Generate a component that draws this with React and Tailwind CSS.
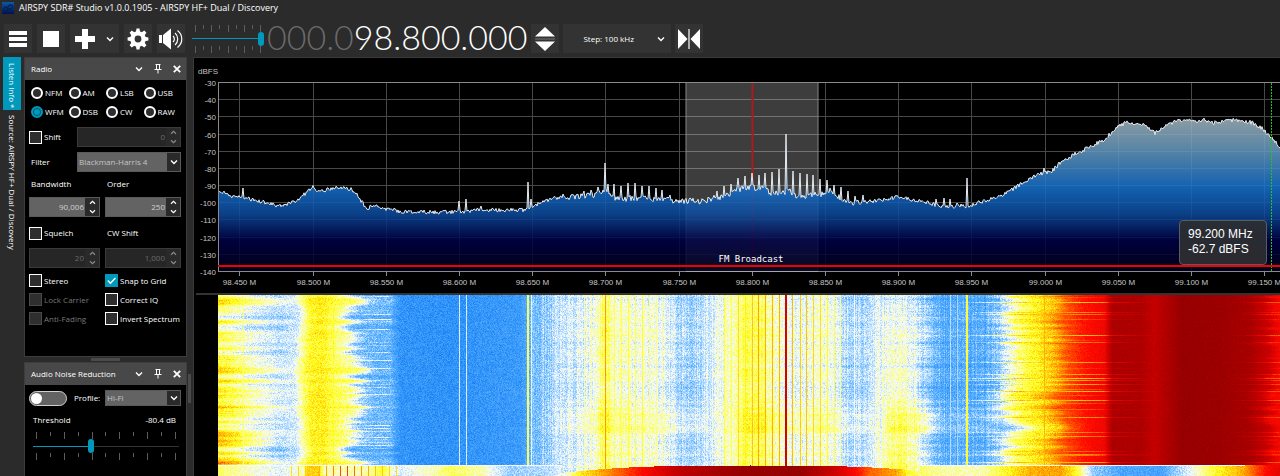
import React, { useState, useEffect, useLayoutEffect, useRef } from 'react';

const BIN_FROM = 218;
const BIN_TO = 1280;
const AXIS_LEFT = 24;

const FLOOR = [
  [218, 191], [228, 194], [232, 197], [242, 197], [250, 199], [262, 202], [270, 204], [280, 206], [288, 204],
  [297, 200], [305, 194], [313, 187], [317, 190], [322, 191], [332, 188], [342, 188], [350, 189], [355, 192],
  [360, 200], [367, 208], [374, 206], [380, 208], [390, 209], [400, 212], [430, 212], [455, 212], [480, 210],
  [500, 210], [525, 210], [531, 207], [545, 201], [560, 197], [575, 197], [590, 196], [600, 193], [605, 189],
  [612, 196], [618, 199], [640, 198], [665, 200], [685, 201], [705, 201], [715, 197], [725, 197], [735, 190],
  [745, 188], [760, 188], [766, 189], [770, 193], [778, 194], [790, 190], [797, 198], [810, 195], [822, 194],
  [830, 191], [836, 195], [843, 201], [850, 204], [865, 202], [880, 200], [898, 197], [910, 199], [925, 202],
  [945, 207], [960, 206], [970, 206], [980, 202], [1000, 197], [1010, 191], [1025, 181], [1040, 174],
  [1052, 171], [1062, 161], [1075, 154], [1090, 147], [1105, 139], [1118, 126], [1128, 122], [1145, 125],
  [1155, 133], [1165, 126], [1177, 120], [1190, 121], [1205, 120], [1212, 123], [1220, 122], [1235, 120],
  [1250, 122], [1262, 128], [1272, 138], [1280, 147],
];

const PEAKS = {
  243: 188, 459: 201, 466: 199, 481: 206, 528: 182, 531: 199, 584: 191, 591: 190, 598: 187, 605: 163, 608: 184,
  614: 184, 621: 186, 628: 183, 635: 183, 642: 186, 649: 186, 656: 188, 662: 190, 670: 195, 717: 191, 724: 186,
  731: 184, 738: 178, 745: 176, 752: 173, 759: 175, 765: 173, 772: 172, 779: 169, 786: 134, 793: 171, 800: 173,
  807: 174, 813: 175, 820: 179, 827: 180, 834: 185, 841: 187, 848: 191, 855: 196, 863: 195, 936: 199, 944: 198,
  950: 199, 957: 203, 967: 178, 1044: 168,
};

// waterfall level per bin, 0 = noise (blue) ... 8 = strongest (dark red)
const LEVELS = [
  [218, 3.9], [232, 3.65], [250, 3.2], [280, 2.75], [294, 2.8], [302, 3.5], [310, 4.05], [322, 4.15], [332, 3.8],
  [345, 3.5], [354, 3], [362, 2.4], [372, 2.1], [390, 2.05], [400, 1.4], [450, 1.35], [520, 1.55], [532, 2.1],
  [548, 2.5], [570, 2.8], [596, 3.1], [600, 3.6], [606, 3.8], [611, 3.3], [640, 3.15], [665, 2.95], [680, 2.6],
  [700, 2.6], [712, 2.9], [730, 3.3], [742, 3.75], [760, 3.75], [768, 3.4], [790, 3], [815, 3.1], [830, 3.2],
  [845, 2.6], [868, 2.6], [882, 3.1], [900, 3.25], [912, 3.1], [925, 2.6], [945, 1.9], [985, 1.9], [1000, 2.5],
  [1012, 3.2], [1024, 3.8], [1044, 4.3], [1054, 4.8], [1066, 5.5], [1082, 5.9], [1104, 6.3], [1112, 7.5],
  [1140, 7.5], [1154, 7.1], [1168, 7.5], [1182, 7.9], [1220, 7.8], [1250, 7.6], [1268, 7], [1280, 6.2],
];

// levels of the newest burst along the lower edge
const BURST = [
  [218, 3.7], [250, 3.2], [280, 2.9], [303, 3.3], [307, 4.5], [318, 4.5], [324, 3.3], [370, 3.4], [382, 4], [396, 2.8],
  [430, 3.3], [450, 3.7], [480, 3.4], [510, 2.4], [550, 2.6], [570, 3.4], [582, 4.3], [610, 5.2], [640, 6],
  [680, 7.2], [740, 7.9], [800, 7.9], [838, 6.8], [870, 5.4], [895, 5], [905, 4.2], [912, 3.8], [940, 3.4], [980, 3.3],
  [1005, 4], [1030, 4.8], [1060, 5], [1076, 4], [1092, 2.4], [1120, 1.8], [1160, 1.7], [1180, 2.6], [1205, 3.6],
  [1240, 4.8], [1265, 6], [1280, 6.5],
];

// carriers: bin, level, width
const CARRIERS = [
  [243, 3.6, 1], [333, 4, 1], [459, 2.8, 1], [466, 2.8, 1], [527, 3.7, 2], [531, 2.9, 1], [605, 5, 1],
  [584, 3.4, 1], [591, 3.4, 1], [614, 3.7, 1], [621, 3.7, 1], [628, 3.8, 1], [635, 3.7, 1], [642, 3.9, 1],
  [649, 3.5, 1], [656, 3.5, 1], [662, 3.4, 1], [724, 3.8, 1], [731, 3.7, 1], [738, 4.3, 1], [745, 4.1, 1],
  [752, 4.6, 1], [758, 4.9, 1], [765, 4.8, 1], [772, 4.8, 1], [779, 4.8, 1], [785, 6.8, 2], [792, 4.7, 1],
  [800, 4.5, 1], [806, 4.6, 1], [813, 4.4, 1], [820, 4.3, 1], [827, 3.9, 1], [834, 3.7, 1], [840, 3.5, 1],
  [854, 3, 1], [950, 2.6, 1], [957, 2.5, 1], [966, 3.9, 2], [1044, 4.8, 1],
];

const PALETTE = [
  [0, 92, 205], [24, 130, 245], [90, 176, 255], [245, 250, 255], [255, 255, 30],
  [255, 160, 0], [255, 10, 0], [200, 0, 0], [145, 0, 0],
];

const random = (seed) => () => {
  seed = (seed + 0x6d2b79f5) | 0;
  let t = Math.imul(seed ^ (seed >>> 15), 1 | seed);
  t = (t + Math.imul(t ^ (t >>> 7), 61 | t)) ^ t;
  return ((t ^ (t >>> 14)) >>> 0) / 4294967296;
};

const interpolate = (points, x) => {
  for (let i = 1; i < points.length; i++) {
    if (x <= points[i][0]) {
      const [x0, y0] = points[i - 1];
      const [x1, y1] = points[i];
      return y0 + ((y1 - y0) * (x - x0)) / (x1 - x0);
    }
  }
  return points[points.length - 1][1];
};

// 0 outside from..to, rises to 1 at the peak
const bump = (x, from, peak, to) => {
  if (x <= from || x >= to) return 0;
  const t = x < peak ? (x - from) / (peak - from) : (to - x) / (to - peak);
  return t * t * (3 - 2 * t);
};

const paletteColor = (level) => {
  const v = Math.max(0, Math.min(7.99, level));
  const i = Math.floor(v);
  const f = v - i;
  return PALETTE[i].map((c, k) => c + (PALETTE[i + 1][k] - c) * f);
};

const useSize = () => {
  const ref = useRef(null);
  const [size, setSize] = useState({ width: 0, height: 0 });
  useLayoutEffect(() => {
    const update = () => setSize({ width: ref.current.clientWidth, height: ref.current.clientHeight });
    update();
    const observer = new ResizeObserver(update);
    observer.observe(ref.current);
    return () => observer.disconnect();
  }, []);
  return [ref, size];
};

const tracePoints = (() => {
  const rand = random(11);
  const points = [];
  for (let bin = BIN_FROM; bin <= BIN_TO; bin++) {
    const jitter = bin > 560 && bin < 860 ? 6 : 4;
    const y = interpolate(FLOOR, bin) + (rand() - 0.5) * jitter;
    points.push([bin, PEAKS[bin] ?? y]);
  }
  return points;
})();

const Spectrum = () => {
  const [ref, { width }] = useSize();
  const scale = (width - AXIS_LEFT) / (BIN_TO - BIN_FROM);
  const toX = (bin) => AXIS_LEFT + (bin - BIN_FROM) * scale;
  const toY = (y) => y - 58;
  const line = tracePoints.map(([b, y]) => `${toX(b).toFixed(1)},${toY(y).toFixed(1)}`).join(' ');
  const levels = Array.from({ length: 12 }, (_, i) => -30 - i * 10);
  const freqs = Array.from({ length: 15 }, (_, i) => 98.45 + i * 0.05);

  return (
    <div ref={ref} className="relative h-[235px] shrink-0 bg-black">
      {width > 0 && (
        <svg className="block w-full h-full font-['Liberation_Sans',sans-serif] text-[8px]" fill="#c4c4c4">
          <defs>
            <linearGradient id="fill" gradientUnits="userSpaceOnUse" x1="0" y1="24" x2="0" y2="213">
              <stop offset="0" stopColor="#c8c8c8" />
              <stop offset="0.2" stopColor="#a0b4be" />
              <stop offset="0.35" stopColor="#6a9cc0" />
              <stop offset="0.56" stopColor="#1671cc" />
              <stop offset="0.7" stopColor="#0c4a9c" />
              <stop offset="0.84" stopColor="#000046" />
              <stop offset="1" stopColor="#00001c" />
            </linearGradient>
          </defs>
          <text x="4" y="16">dBFS</text>
          {levels.map((db, i) => {
            const y = Math.round(24 + (i * 189) / 11) + 0.5;
            return (
              <g key={db}>
                <line x1={AXIS_LEFT} x2={width} y1={y} y2={y} stroke={i === 0 || i === 11 ? '#8a8a8a' : '#484848'} />
                <text x="22" y={y + 3} textAnchor="end">{db}</text>
              </g>
            );
          })}
          {freqs.map((freq, i) => {
            const x = Math.round(toX(239.3 + i * 73.2)) + 0.5;
            return (
              <g key={i}>
                <line x1={x} x2={x} y1="25" y2="213" stroke="#484848" />
                <line x1={x} x2={x} y1="214" y2="218" stroke="#8a8a8a" />
                <text x={x} y="227" textAnchor="middle">{freq.toFixed(3)} M</text>
              </g>
            );
          })}
          <rect x={toX(686)} y="25" width={132 * scale} height="189" fill="#fff" fillOpacity="0.24" />
          <path d={`M${toX(686)} 25V213M${toX(818)} 25V213`} stroke="#858585" />
          <line x1={toX(752.5)} x2={toX(752.5)} y1="25" y2="213" stroke="#a81c1c" strokeWidth="2" />
          <polygon points={`${AXIS_LEFT},213 ${line} ${width},213`} fill="url(#fill)" fillOpacity="0.86" />
          <polyline points={line} fill="none" stroke="#e6eaee" strokeWidth="1" />
          <line x1={toX(1271.5)} x2={toX(1271.5)} y1="25" y2="213" stroke="#1fc41f" strokeDasharray="2 1" />
          <line x1={AXIS_LEFT + 0.5} x2={AXIS_LEFT + 0.5} y1="24" y2="214" stroke="#8a8a8a" />
          <rect x={AXIS_LEFT} y="207" width={width - AXIS_LEFT} height="2" fill="#f00000" />
          <text
            x={toX(751)}
            y="204"
            textAnchor="middle"
            fill="#fff"
            className="font-['DejaVu_Sans_Mono',monospace] text-[9px]"
          >
            FM Broadcast
          </text>
        </svg>
      )}
      <div className="absolute right-[13px] bottom-[28px] w-[88px] h-[45px] pl-2 pt-[6px] rounded-[4px] border border-[#5a5c60] bg-[#2b2d32]/95 text-white font-['Liberation_Sans',sans-serif] text-[12px] leading-[15px] whitespace-nowrap">
        <div>99.200 MHz</div>
        <div>-62.7 dBFS</div>
      </div>
    </div>
  );
};

const smoothRows = (rand, count, spread) => {
  const raw = Array.from({ length: count + spread * 2 }, () => rand() * 2 - 1);
  return Array.from({ length: count }, (_, i) => {
    let sum = 0;
    for (let k = 0; k <= spread * 2; k++) sum += raw[i + k];
    return sum / Math.sqrt(spread * 2 + 1);
  });
};

const Waterfall = () => {
  const [ref, { width, height }] = useSize();
  const canvasRef = useRef(null);

  useEffect(() => {
    if (!width || !height) return;
    const ctx = canvasRef.current.getContext('2d');
    const image = ctx.createImageData(width, height);
    const rand = random(42);
    const slowLeft = smoothRows(rand, height, 6);
    const fastLeft = smoothRows(rand, height, 1);
    const slowMid = smoothRows(rand, height, 8);
    const fastMid = smoothRows(rand, height, 1);
    const slowRight = smoothRows(rand, height, 6);
    const fastRight = smoothRows(rand, height, 1);
    const streak = Array.from({ length: height }, () => (rand() > 0.8 ? rand() : 0));
    const streakLeft = Array.from({ length: height }, () => (rand() > 0.88 ? rand() : 0));
    const burstStart = height - 11;

    const columns = Array.from({ length: width }, (_, col) => {
      const bin = BIN_FROM + (col * (BIN_TO - BIN_FROM)) / width;
      return {
        bin,
        burst: interpolate(BURST, bin),
        carrier: CARRIERS.find(([b, , w]) => bin >= b && bin < b + w),
        ripple: rand() - 0.5,
        edgeA: bump(bin, 270, 300, 320),
        edgeB: bump(bin, 320, 358, 400),
        edgeC: bump(bin, 680, 725, 750) + bump(bin, 860, 880, 895) + bump(bin, 905, 925, 950),
        edgeD: bump(bin, 960, 1025, 1108),
        edgeE: Math.max(0, (bin - 1225) / 55),
        streakLeft: bump(bin, 340, 385, 396),
        streakRight: bump(bin, 940, 1010, 1045),
        dip: bump(bin, 1040, 1085, 1170),
      };
    });

    for (let y = 0; y < height; y++) {
      for (let x = 0; x < width; x++) {
        const c = columns[x];
        const { bin } = c;
        const noise = rand() + rand() - 1;
        const dome = bin > 560 && bin < 920 ? Math.pow(Math.abs(bin - 750) / 175, 3) * 6 : 0;
        let level;
        if (y >= burstStart + dome) {
          level = c.burst + noise * (c.burst > 5 ? 0.2 : 0.45);
          if (bin > 284 && bin < 400 && Math.floor(bin - 284) % 7 === 0) {
            level = 4 + 1.8 * Math.exp(-Math.abs(bin - 345) / 30);
          }
          if (y === burstStart && c.burst < 5) level = 3;
        } else if (c.carrier) {
          level = c.carrier[1] + noise * 0.2;
        } else {
          // band edges wander from row to row
          const shift =
            c.edgeA * slowLeft[y] * 4 -
            c.edgeB * (slowLeft[y] * 12 + fastLeft[y] * 9) -
            c.edgeC * (slowMid[y] * 7 + fastMid[y] * 4) +
            c.edgeD * (slowRight[y] * 9 + fastRight[y] * 8) +
            c.edgeE * (Math.max(0, fastRight[y]) * 10 + streak[y] * 12);
          level = interpolate(LEVELS, Math.max(BIN_FROM, Math.min(BIN_TO, bin + shift)));
          level += noise * (level > 5 ? 0.2 : 0.5);
          if (bin < 305) {
            const fade = Math.min(1, (305 - bin) / 25) * (1 - (bin - 218) / 130);
            level += (slowLeft[y] * 0.5 + fastLeft[y] * 0.5) * fade;
            if (y > height - 45) level += 0.8 * Math.max(0, 1 - (bin - 218) / 60);
          } else if (bin < 400) {
            level += c.streakLeft * streakLeft[y] * 1.1 + fastLeft[y] * 0.12;
          } else if (bin > 530 && bin < 1000) {
            level += c.ripple * 0.4 + (slowMid[y] * 0.2 + fastMid[y] * 0.14) * Math.min(1, (bin - 530) / 60);
            if (bin > 860 && bin < 935) level += bump(bin, 860, 900, 935) * (y / height - 0.4) * 0.8;
          }
          level += c.streakRight * streak[y] * 1.2;
          level -= c.dip * streak[y] * 1.5 + c.edgeE * streak[y] * 0.9;
        }
        const [r, g, b] = paletteColor(level);
        const i = (y * width + x) * 4;
        image.data[i] = r;
        image.data[i + 1] = g;
        image.data[i + 2] = b;
        image.data[i + 3] = 255;
      }
    }
    ctx.putImageData(image, 0, 0);
  }, [width, height]);

  return (
    <div ref={ref} className="flex-1 min-h-0 ml-6 overflow-hidden">
      <canvas ref={canvasRef} width={width} height={height} className="block" aria-label="Waterfall" />
    </div>
  );
};

const Chevron = ({ up, className }) => (
  <svg className={className} viewBox="0 0 8 6" fill="none" stroke="currentColor" strokeWidth="1.4">
    <path d={up ? 'M1 4.5L4 1.5L7 4.5' : 'M1 1.5L4 4.5L7 1.5'} />
  </svg>
);

const ToolButton = ({ label, className = 'w-7', children }) => (
  <button aria-label={label} className={`flex items-center justify-center h-[29px] bg-[#333333] text-white ${className}`}>
    {children}
  </button>
);

const Ticks = ({ count }) => (
  <div className="flex justify-between items-start h-[7px] mx-[3px]">
    {Array.from({ length: count }, (_, i) => (
      <span key={i} className={`w-px bg-[#5c5c5c] ${i % 2 ? 'h-1' : 'h-[7px]'}`} />
    ))}
  </div>
);

const Slider = ({ label, value, ticks, className = '' }) => {
  const [current, setCurrent] = useState(value);
  return (
    <div className={className}>
      <Ticks count={ticks} />
      <input
        type="range"
        aria-label={label}
        value={current}
        onChange={(e) => setCurrent(Number(e.target.value))}
        style={{ '--value': `${current}%` }}
        className="block w-full h-[14px] appearance-none bg-transparent bg-[linear-gradient(to_right,#0099bc_var(--value),#333333_var(--value))] bg-[length:100%_1px] bg-center bg-no-repeat [&::-webkit-slider-thumb]:appearance-none [&::-webkit-slider-thumb]:w-[6px] [&::-webkit-slider-thumb]:h-[14px] [&::-webkit-slider-thumb]:rounded-[3px] [&::-webkit-slider-thumb]:bg-[#0099bc]"
      />
      <Ticks count={ticks} />
    </div>
  );
};

const GearIcon = () => (
  <svg className="w-[22px] h-[22px]" viewBox="0 0 22 22" fill="currentColor">
    {[0, 45, 90, 135, 180, 225, 270, 315].map((angle) => (
      <path key={angle} d="M8.8 4.5L9.5 0.6H12.5L13.2 4.5Z" transform={`rotate(${angle} 11 11)`} />
    ))}
    <path fillRule="evenodd" d="M11 3.2a7.8 7.8 0 1 0 0 15.6a7.8 7.8 0 0 0 0-15.6ZM11 7.6a3.4 3.4 0 1 1 0 6.8a3.4 3.4 0 0 1 0-6.8Z" />
  </svg>
);

const Toolbar = () => (
  <div className="flex items-center shrink-0 pl-1 pt-[9px] pb-1">
    <ToolButton label="Menu">
      <svg className="w-[18px] h-4" viewBox="0 0 18 16" fill="currentColor">
        <path d="M0 0H18V4H0ZM0 6H18V10H0ZM0 12H18V16H0Z" />
      </svg>
    </ToolButton>
    <ToolButton label="Stop" className="w-7 ml-[5px]">
      <span className="w-4 h-4 bg-white" />
    </ToolButton>
    <ToolButton label="Add" className="w-[49px] ml-[5px] gap-[11px]">
      <svg className="w-5 h-5" viewBox="0 0 20 20" fill="currentColor">
        <path d="M7 0H13V7H20V13H13V20H7V13H0V7H7Z" />
      </svg>
      <Chevron className="w-2 h-[6px]" />
    </ToolButton>
    <ToolButton label="Settings" className="w-7 ml-[5px]">
      <GearIcon />
    </ToolButton>
    <ToolButton label="Mute" className="w-7 ml-[5px]">
      <svg className="w-6 h-[22px]" viewBox="0 0 24 22">
        <path d="M0 7H3V15H0ZM4 7L12 0.5V21.5L4 15Z" fill="#fff" />
        <path d="M14 8C15.8 9.6 15.8 12.4 14 14M16 5C19.6 8 19.6 14 16 17M18.5 2.5C24.2 7 24.2 15 18.5 19.5" fill="none" stroke="#fff" strokeWidth="1.2" />
      </svg>
    </ToolButton>
    <Slider label="Volume" value={100} ticks={9} className="w-[72px] ml-[7px]" />
    <output aria-label="Frequency" className="flex ml-[3px] h-[29px] pb-1 items-center font-['Lato',sans-serif] font-light text-[34px] leading-[29px] text-white">
      <span className="text-[#6a6a6a]">000.0</span>
      <span>98.800.000</span>
    </output>
    <ToolButton label="Tune up or down" className="w-7 ml-1">
      <svg className="w-5 h-6" viewBox="0 0 20 24" fill="currentColor">
        <path d="M10 0L20 9.5H0ZM10 24L20 14.5H0Z" />
        <path d="M0 12H20" stroke="#777" />
      </svg>
    </ToolButton>
    <div className="relative w-[108px] ml-1">
      <select aria-label="Step" className="block w-full h-[29px] pl-5 appearance-none bg-[#333333] text-white text-[8px]">
        <option>Step: 100 kHz</option>
      </select>
      <Chevron className="absolute right-[6px] top-3 w-2 h-[6px] text-white pointer-events-none" />
    </div>
    <ToolButton label="Center" className="w-7 ml-1">
      <svg className="w-[22px] h-5" viewBox="0 0 22 20" fill="currentColor">
        <path d="M0 0L9.5 10L0 20ZM22 0L12.5 10L22 20ZM10.4 0H11.6V20H10.4Z" />
      </svg>
    </ToolButton>
  </div>
);

const Panel = ({ title, className = '', children }) => (
  <section className={`border border-[#3d3d3d] bg-black ${className}`}>
    <header className="flex items-center h-[22px] pl-[6px] pr-[5px] bg-[#484848] text-white">
      <h2 className="flex-1 whitespace-nowrap">{title}</h2>
      <button aria-label={`Collapse ${title}`}>
        <Chevron className="w-2 h-[6px]" />
      </button>
      <button aria-label={`Pin ${title}`} className="ml-[11px]">
        <svg className="w-2 h-[10px]" viewBox="0 0 8 10" fill="none" stroke="currentColor">
          <path d="M1.5 0.5H6.5M2.5 0.5V5.5M5.5 0.5V5.5M0.5 5.5H7.5M4 5.5V9.5" />
        </svg>
      </button>
      <button aria-label={`Close ${title}`} className="ml-[11px]">
        <svg className="w-2 h-2" viewBox="0 0 8 8" stroke="currentColor" strokeWidth="1.8">
          <path d="M0.8 0.8L7.2 7.2M7.2 0.8L0.8 7.2" />
        </svg>
      </button>
    </header>
    {children}
  </section>
);

const Check = ({ label, checked, disabled }) => (
  <label className={`flex items-center gap-[2px] whitespace-nowrap ${disabled ? 'text-[#787878]' : 'text-white'}`}>
    <span className="relative flex">
      <input
        type="checkbox"
        defaultChecked={checked}
        disabled={disabled}
        className="peer w-[13px] h-[13px] appearance-none border border-white bg-[#2e2e2e] checked:border-[#0099bc] checked:bg-[#0099bc] disabled:border-[#4a4a4a]"
      />
      <svg className="absolute inset-0 hidden peer-checked:block pointer-events-none" viewBox="0 0 13 13" fill="none" stroke="#fff" strokeWidth="1.4">
        <path d="M2.8 6.5L5.4 9.2L10.4 4" />
      </svg>
    </span>
    {label}
  </label>
);

const Spinner = ({ label, id, value, disabled, className = '' }) => (
  <div className={`flex min-w-0 h-5 border ${disabled ? 'border-[#3a3a3a] bg-[#262626] text-[#6a6a6a]' : 'border-[#5a5a5a] bg-[#636363] text-[#d0d0d0]'} ${className}`}>
    <input
      id={id}
      aria-label={label}
      type="text"
      defaultValue={value}
      disabled={disabled}
      className="flex-1 w-0 min-w-0 bg-transparent text-right pr-px"
    />
    <div className={`flex flex-col justify-around items-center w-[14px] shrink-0 bg-[#2a2a2a] ${disabled ? 'text-[#8a8a8a]' : 'text-white'}`}>
      <button aria-label={`Increase ${label}`} disabled={disabled}>
        <Chevron up className="w-[7px] h-[5px]" />
      </button>
      <button aria-label={`Decrease ${label}`} disabled={disabled}>
        <Chevron className="w-[7px] h-[5px]" />
      </button>
    </div>
  </div>
);

const Dropdown = ({ id, value, className = '' }) => (
  <div className={`relative min-w-0 ${className}`}>
    <select id={id} className="block w-full h-full pl-[1px] appearance-none bg-[#636363] border border-[#5a5a5a] text-[#c4c4c4]">
      <option>{value}</option>
    </select>
    <span className="absolute right-px top-px bottom-px w-[13px] flex items-center justify-center bg-[#2a2a2a] text-white pointer-events-none">
      <Chevron className="w-2 h-[6px]" />
    </span>
  </div>
);

const RadioPanel = () => {
  const [mode, setMode] = useState('WFM');
  return (
    <Panel title="Radio" className="h-[300px] shrink-0">
      <div className="pl-1 pr-[5px] pt-[3px] text-white">
        <div className="grid grid-cols-4 pl-[2px]">
          {['NFM', 'AM', 'LSB', 'USB', 'WFM', 'DSB', 'CW', 'RAW'].map((name) => (
            <label key={name} className="flex items-center gap-[2px] h-[19px]">
              <input
                type="radio"
                name="mode"
                checked={mode === name}
                onChange={() => setMode(name)}
                className="w-3 h-3 shrink-0 appearance-none rounded-full border-2 border-white bg-[#2e2e2e] checked:border-[#0099bc] checked:bg-[#0099bc] checked:shadow-[inset_0_0_0_1px_#06506a]"
              />
              {name}
            </label>
          ))}
        </div>
        <div className="flex items-center mt-[6px]">
          <div className="w-12 shrink-0"><Check label="Shift" /></div>
          <Spinner label="Shift value" value="0" disabled className="flex-1" />
        </div>
        <div className="flex items-center mt-[5px]">
          <label htmlFor="filter" className="w-12 shrink-0 pl-[2px]">Filter</label>
          <Dropdown id="filter" value="Blackman-Harris 4" className="flex-1 h-5" />
        </div>
        <div className="grid grid-cols-[minmax(0,71fr)_minmax(0,76fr)] gap-x-[5px]">
          <label htmlFor="bandwidth" className="mt-1 h-4 leading-4 pl-[2px]">Bandwidth</label>
          <label htmlFor="order" className="mt-1 h-4 leading-4 pl-[2px]">Order</label>
          <Spinner id="bandwidth" label="Bandwidth" value="90,006" className="mt-[5px]" />
          <Spinner id="order" label="Order" value="250" className="mt-[5px]" />
          <div className="mt-2 h-4 flex items-center"><Check label="Squelch" /></div>
          <label htmlFor="cw-shift" className="mt-2 h-4 leading-4 pl-[2px]">CW Shift</label>
          <Spinner label="Squelch level" value="20" disabled className="mt-[7px]" />
          <Spinner id="cw-shift" label="CW Shift" value="1,000" disabled className="mt-[7px]" />
        </div>
        <div className="grid grid-cols-[minmax(0,71fr)_minmax(0,76fr)] gap-x-[5px] auto-rows-[19px] items-center mt-[3px]">
          <Check label="Stereo" />
          <Check label="Snap to Grid" checked />
          <Check label="Lock Carrier" disabled />
          <Check label="Correct IQ" />
          <Check label="Anti-Fading" disabled />
          <Check label="Invert Spectrum" />
        </div>
      </div>
    </Panel>
  );
};

const NoisePanel = () => (
  <Panel title="Audio Noise Reduction" className="flex-1 border-b-0">
    <div className="pl-1 pr-[5px] pt-[5px] text-white">
      <div className="flex items-center h-4">
        <button
          role="switch"
          aria-checked="false"
          aria-label="Audio Noise Reduction"
          className="w-[38px] h-[15px] p-px rounded-full border border-[#d0d0d0] bg-[#636363]"
        >
          <span className="block w-[11px] h-[11px] rounded-full bg-white" />
        </button>
        <label htmlFor="profile" className="flex-1 pl-[7px]">Profile:</label>
        <Dropdown id="profile" value="Hi-Fi" className="w-[76px] h-4" />
      </div>
      <div className="flex justify-between h-3 leading-3 mt-2 pl-1 pr-[5px]">
        <span>Threshold</span>
        <span>-80.4 dB</span>
      </div>
      <Slider label="Threshold" value={39} ticks={11} className="mt-[6px] ml-1 mr-[2px]" />
    </div>
  </Panel>
);

const App = () => {
  return (
    <div className="flex flex-col h-screen overflow-hidden bg-[#2b2b2b] text-white font-['Open_Sans','Noto_Sans',sans-serif] text-[8px] leading-[12px]">
      <div className="flex items-center gap-[5px] h-[15px] shrink-0 pl-[2px]">
        <svg className="w-3 h-3" viewBox="0 0 12 12">
          <defs>
            <linearGradient id="logo" x1="0" y1="0" x2="0" y2="1">
              <stop offset="0" stopColor="#0a5aa8" />
              <stop offset="1" stopColor="#00104e" />
            </linearGradient>
          </defs>
          <rect width="12" height="12" fill="url(#logo)" />
          <path d="M1 9C2 5 4 4 5.5 6C6.5 8 3 10 2.5 8M6 5C7.5 2 11 2.5 10.5 5C10 8 7 8 6.5 6" fill="none" stroke="#04204e" strokeWidth="1.2" />
        </svg>
        <h1 className="text-[9px]">AIRSPY SDR# Studio v1.0.0.1905 - AIRSPY HF+ Dual / Discovery</h1>
      </div>
      <Toolbar />
      <main className="flex flex-1 min-h-0">
        <nav className="flex flex-col w-[18px] ml-[3px] mr-[3px] shrink-0">
          <button className="flex items-center w-full h-[53px] pt-[6px] bg-[#0099bc] [writing-mode:vertical-rl] whitespace-nowrap">
            Listen Info *
          </button>
          <button className="flex items-center w-full pt-[5px] [writing-mode:vertical-rl] whitespace-nowrap">
            Source: AIRSPY HF+ Dual / Discovery
          </button>
        </nav>
        <aside className="flex flex-col w-[163px] shrink-0">
          <RadioPanel />
          <div className="flex justify-center items-center h-[5px] shrink-0">
            <span className="w-[29px] h-[3px] bg-[#4a4a4a]" />
          </div>
          <NoisePanel />
        </aside>
        <div className="w-[6px] shrink-0 pl-px pt-[317px]">
          <div className="w-[3px] h-[29px] bg-[#4a4a4a]" />
        </div>
        <div className="flex flex-col flex-1 min-w-0 bg-black border-l border-t border-[#3a3a3a]">
          <Spectrum />
          <div className="h-[2px] ml-[2px] shrink-0 bg-[#333333]" />
          <Waterfall />
        </div>
      </main>
    </div>
  );
};

export default App;
